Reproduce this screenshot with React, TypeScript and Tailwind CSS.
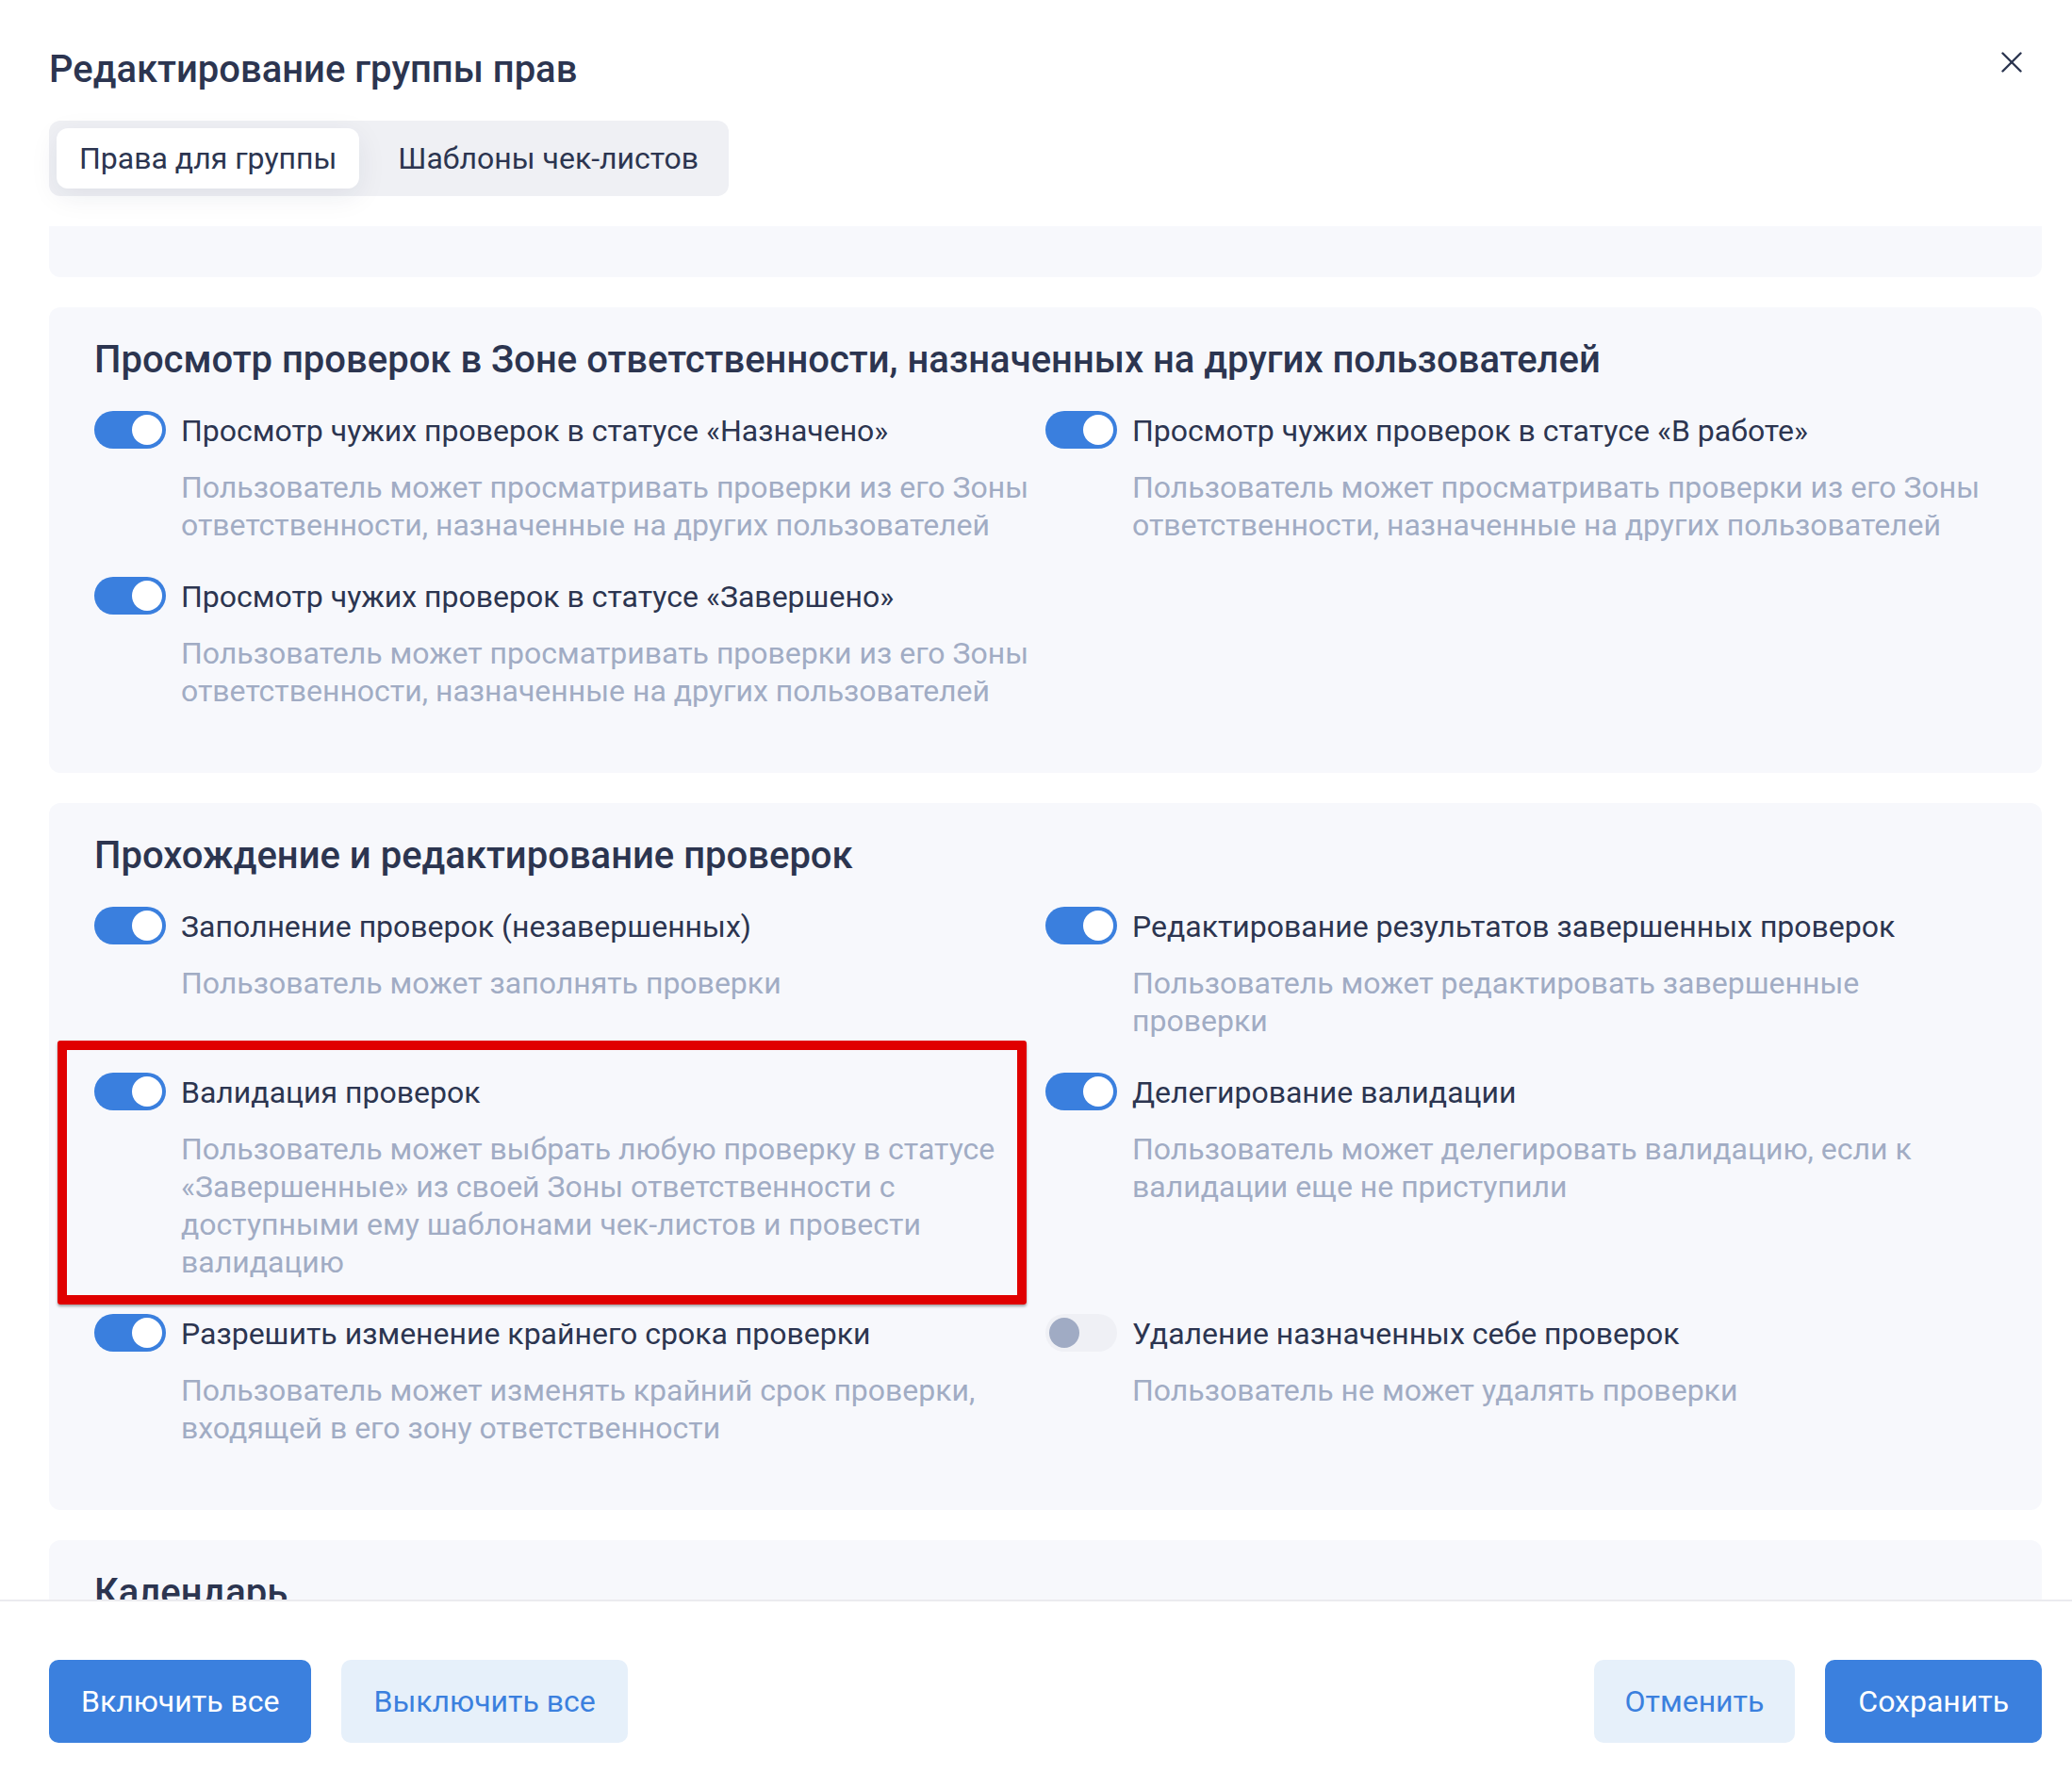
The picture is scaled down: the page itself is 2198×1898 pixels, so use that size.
import React from "react";

const Toggle = ({ on }: { on: boolean }) =>
  on ? (
    <div className="w-[76px] h-[40px] rounded-full bg-[#3a7fde] flex items-center justify-end px-[4px] shrink-0">
      <div className="w-[32px] h-[32px] rounded-full bg-white" />
    </div>
  ) : (
    <div className="w-[76px] h-[40px] rounded-full bg-[#eff0f5] flex items-center justify-start px-[4px] shrink-0">
      <div className="w-[32px] h-[32px] rounded-full bg-[#a0abc4]" />
    </div>
  );

type ItemProps = { on?: boolean; label: string; lines: string[]; marked?: boolean };

const Item = ({ on = true, label, lines, marked }: ItemProps) => (
  <div className="relative flex flex-col">
    {marked && (
      <div className="absolute left-[-39px] top-[-34px] w-[1028px] h-[280px] border-[10px] border-[#e00000] rounded-[3px] shadow-[0_2px_3px_rgba(0,0,0,0.35)] pointer-events-none" />
    )}
    <div className="flex items-center gap-[16px] h-[40px]">
      <Toggle on={on} />
      <span className="text-[32px] leading-[40px] text-[#2c3550] whitespace-nowrap pt-[1px]">{label}</span>
    </div>
    <div className="pl-[92px] mt-[21px] text-[32px] leading-[40px] text-[#a1acc4]">
      {lines.map((l, i) => (
        <div key={i} className="whitespace-nowrap">
          {l}
        </div>
      ))}
    </div>
  </div>
);

const Card = ({ title, children }: { title: string; children?: React.ReactNode }) => (
  <div className="bg-[#f7f8fc] rounded-[12px] pt-[33px] pb-[67px] px-[48px] shrink-0">
    <h2 className="text-[40px] leading-[46px] font-medium text-[#2c3550] mb-[31px]">{title}</h2>
    <div className="grid grid-cols-2 gap-y-[35px]">{children}</div>
  </div>
);

const viewLines = [
  "Пользователь может просматривать проверки из его Зоны",
  "ответственности, назначенные на других пользователей",
];

export default function App() {
  return (
    <div className="w-[2198px] h-[1898px] bg-white flex flex-col overflow-hidden font-['Roboto',sans-serif]">
      <div className="pl-[52px] pr-[32px] pt-[52px] flex flex-col shrink-0">
        <div className="flex items-start justify-between">
          <h1 className="text-[40px] leading-[44px] font-medium text-[#2c3550]">Редактирование группы прав</h1>
          <button className="mt-[3px] mr-[21px] text-[#2c3550]">
            <svg width="22" height="22" viewBox="0 0 22 22" fill="none" stroke="currentColor" strokeWidth="2.4" strokeLinecap="round">
              <path d="M1.5 1.5 L20.5 20.5" />
              <path d="M20.5 1.5 L1.5 20.5" />
            </svg>
          </button>
        </div>
        <div className="mt-[32px] flex w-fit gap-[17px] bg-[#eff0f4] rounded-[12px] p-[8px]">
          <div className="h-[64px] px-[24px] flex items-center bg-white rounded-[12px] text-[32px] text-[#2c3550] shadow-[0_8px_30px_rgba(30,40,80,0.08)]">
            Права для группы
          </div>
          <div className="h-[64px] px-[24px] flex items-center text-[32px] text-[#2c3550]">Шаблоны чек-листов</div>
        </div>
      </div>

      <div className="flex-1 min-h-0 overflow-hidden pl-[52px] pr-[32px] pt-[32px] flex flex-col gap-[32px]">
        <div className="h-[54px] bg-[#f7f8fc] rounded-b-[12px] shrink-0" />
        <Card title="Просмотр проверок в Зоне ответственности, назначенных на других пользователей">
          <Item label="Просмотр чужих проверок в статусе «Назначено»" lines={viewLines} />
          <Item label="Просмотр чужих проверок в статусе «В работе»" lines={viewLines} />
          <Item label="Просмотр чужих проверок в статусе «Завершено»" lines={viewLines} />
        </Card>
        <Card title="Прохождение и редактирование проверок">
          <Item label="Заполнение проверок (незавершенных)" lines={["Пользователь может заполнять проверки"]} />
          <Item
            label="Редактирование результатов завершенных проверок"
            lines={["Пользователь может редактировать завершенные", "проверки"]}
          />
          <Item
            marked
            label="Валидация проверок"
            lines={[
              "Пользователь может выбрать любую проверку в статусе",
              "«Завершенные» из своей Зоны ответственности с",
              "доступными ему шаблонами чек-листов и провести",
              "валидацию",
            ]}
          />
          <Item
            label="Делегирование валидации"
            lines={["Пользователь может делегировать валидацию, если к", "валидации еще не приступили"]}
          />
          <Item
            label="Разрешить изменение крайнего срока проверки"
            lines={["Пользователь может изменять крайний срок проверки,", "входящей в его зону ответственности"]}
          />
          <Item on={false} label="Удаление назначенных себе проверок" lines={["Пользователь не может удалять проверки"]} />
        </Card>
        <Card title="Календарь" />
      </div>

      <div className="h-[201px] shrink-0 border-t-2 border-[#ebebef] bg-white pl-[52px] pr-[32px] pt-[62px] flex justify-between items-start">
        <div className="flex gap-[32px]">
          <button className="h-[88px] px-[34px] rounded-[10px] bg-[#3b80de] text-white text-[32px]">Включить все</button>
          <button className="h-[88px] px-[34px] rounded-[10px] bg-[#e6f0fa] text-[#3b80de] text-[32px]">Выключить все</button>
        </div>
        <div className="flex gap-[32px]">
          <button className="h-[88px] px-[33px] rounded-[10px] bg-[#e6f0fa] text-[#3b80de] text-[32px]">Отменить</button>
          <button className="h-[88px] px-[35px] rounded-[10px] bg-[#3b80de] text-white text-[32px]">Сохранить</button>
        </div>
      </div>
    </div>
  );
}
